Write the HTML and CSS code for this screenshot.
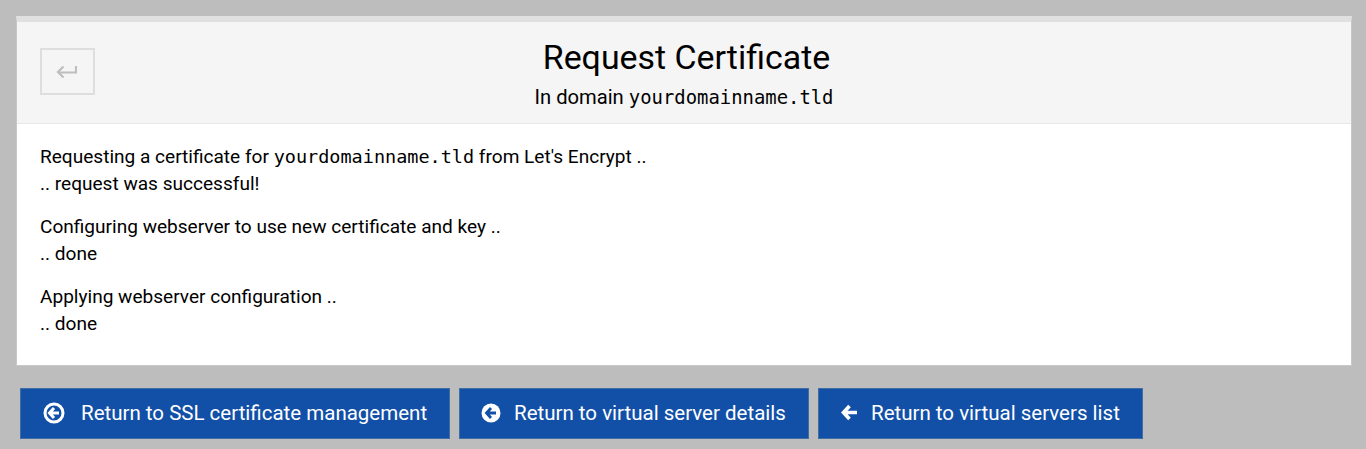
FILE: index.html
```html
<!DOCTYPE html>
<html lang="en">
<head>
<meta charset="utf-8">
<title>Request Certificate</title>
<link rel="stylesheet" href="styles.css">
</head>
<body>
<main class="panel">
  <header class="panel-head">
    <a class="back" href="#" aria-label="Back">
      <svg width="21" height="14" viewBox="0 0 21 14" fill="none" stroke="#bebebe" stroke-width="2.200"><path d="M20 1v6.500H2.500"/><path d="M7.500 1.500 2 7l5.500 5.500"/></svg>
    </a>
    <h1 class="title">Request Certificate</h1>
    <p class="subtitle">In domain <code class="mono-head">yourdomainname.tld</code></p>
  </header>
  <section class="panel-body">
    <p class="para">Requesting a certificate for <code class="mono">yourdomainname.tld</code> from Let's Encrypt ..<br>.. request was successful!</p>
    <p class="para">Configuring webserver to use new certificate and key ..<br>.. done</p>
    <p class="para">Applying webserver configuration ..<br>.. done</p>
  </section>
</main>
<nav class="actions">
  <a class="btn btn-ssl" href="#">
    <svg class="icon" width="22" height="22" viewBox="0 0 22 22"><circle cx="11" cy="11" r="9" fill="none" stroke="#fff" stroke-width="3"/><path d="M11 6 6.500 11l4.500 5M7 11h9" fill="none" stroke="#fff" stroke-width="3"/></svg>
    <span>Return to SSL certificate management</span>
  </a>
  <a class="btn btn-details" href="#">
    <svg class="icon" width="20" height="20" viewBox="0 0 20 20"><circle cx="10" cy="10" r="9.500" fill="#fff"/><path d="M10 5 5.500 10l4.500 5M6 10h9" fill="none" stroke="#1250a8" stroke-width="2.800"/></svg>
    <span>Return to virtual server details</span>
  </a>
  <a class="btn btn-list" href="#">
    <svg class="icon" width="16" height="17" viewBox="0 0 16 17"><path d="M8.500 2 2.500 8.500l6 6.500M3.500 8.500H16" fill="none" stroke="#fff" stroke-width="3.600"/></svg>
    <span>Return to virtual servers list</span>
  </a>
</nav>
</body>
</html>
```
FILE: styles.css
```css
* { box-sizing: border-box; }
html, body { margin: 0; height: 100%; }
body {
  background: #bdbdbd;
  padding: 16px 14px 0 16px;
  font-family: Roboto, "Liberation Sans", sans-serif;
  font-size: 19.070px;
  color: #000;
  overflow: hidden;
}
.panel {
  background: #fff;
  border-top: 6px solid #e0e0e0;
  border-left: 1px solid #c8c8c8;
  border-right: 1px solid #c8c8c8;
  border-bottom: 1px solid #c8c8c8;
  height: 350px;
}
.panel-head {
  position: relative;
  height: 102px;
  background: #f5f5f5;
  border-bottom: 1px solid #e8e8e8;
  text-align: center;
  padding-top: 15px;
}
.back {
  position: absolute;
  left: 23px;
  top: 26px;
  width: 55px;
  height: 47px;
  border: 2px solid #dedede;
  display: flex;
  align-items: center;
  justify-content: center;
  padding-right: 3px;
}
.title { margin: 0; padding-left: 5px; font-size: 33.900px; font-weight: 400; line-height: 42px; }
.subtitle { margin: 5px 0 0; line-height: 27px; font-size: 20.200px; }
.mono { font-family: "DejaVu Sans Mono", "Liberation Mono", monospace; font-size: 18.500px; }
.mono-head { font-family: "DejaVu Sans Mono", "Liberation Mono", monospace; font-size: 18.900px; }
.panel-body { padding: 19px 23px 0; }
.para { margin: 0 0 16px; line-height: 27px; }
.actions { display: flex; gap: 9px; margin: 22px 0 0 4px; }
.btn {
  height: 51px;
  display: flex;
  align-items: center;
  padding-bottom: 2px;
  background: #1250a8;
  border: 1px solid #3f6ea3;
  color: #fff;
  text-decoration: none;
  font-size: 20.500px;
}
.btn-ssl { width: 430px; padding-left: 22px; gap: 16px; }
.btn-details { width: 350px; padding-left: 21px; gap: 13px; }
.btn-list { width: 325px; padding-left: 22px; gap: 14px; }
.icon { flex: none; }
```
